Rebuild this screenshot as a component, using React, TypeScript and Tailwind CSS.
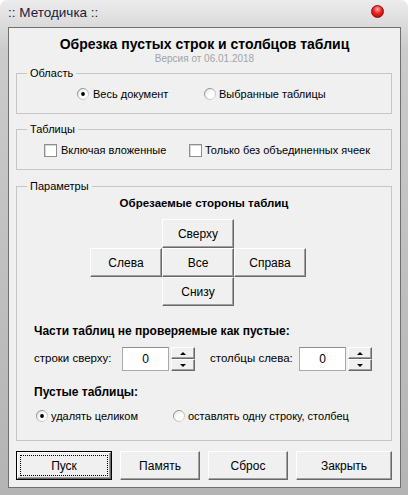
import React from "react";

const font = { fontFamily: '"Liberation Sans", Arial, sans-serif' };

function Radio({ checked }: { checked?: boolean }) {
  return (
    <svg viewBox="0 0 12 12" className="w-[12px] h-[12px] shrink-0">
      <defs>
        <linearGradient id="rg" x1="0" y1="0" x2="1" y2="1">
          <stop offset="0" stopColor="#7d7d7d" />
          <stop offset="1" stopColor="#e2e2e2" />
        </linearGradient>
        <linearGradient id="rf" x1="0" y1="0" x2="1" y2="1">
          <stop offset="0" stopColor="#dcdcdc" />
          <stop offset="0.5" stopColor="#ffffff" />
        </linearGradient>
      </defs>
      <circle cx="6" cy="6" r="5.5" fill="url(#rf)" stroke="url(#rg)" strokeWidth="1" />
      {checked && <circle cx="6" cy="6" r="1.9" fill="#000" />}
    </svg>
  );
}

function Checkbox() {
  return (
    <div className="w-[13px] h-[13px] shrink-0 border border-[#8f8f8f] bg-white shadow-[inset_1px_1px_0_#d8d8d8]" />
  );
}

function Btn({ children, className = "" }: { children: React.ReactNode; className?: string }) {
  return (
    <button className={`flex items-center justify-center bg-[#f0f0f0] border border-t-white border-l-white border-r-[#696969] border-b-[#696969] shadow-[inset_-1px_-1px_0_#a0a0a0] text-[12px] text-black ${className}`}>
      {children}
    </button>
  );
}

function Spin() {
  const half =
    "flex-1 flex items-center justify-center bg-[#f0f0f0] border border-t-white border-l-white border-r-[#696969] border-b-[#696969] shadow-[inset_-1px_-1px_0_#a0a0a0]";
  return (
    <div className="flex flex-col w-[24px] h-[24px] ml-[2px]">
      <div className={half}>
        <div className="w-0 h-0 border-l-[3px] border-r-[3px] border-b-[3px] border-l-transparent border-r-transparent border-b-black" />
      </div>
      <div className={half}>
        <div className="w-0 h-0 border-l-[3px] border-r-[3px] border-t-[3px] border-l-transparent border-r-transparent border-t-black" />
      </div>
    </div>
  );
}

function NumField() {
  return (
    <div className="w-[47px] h-[24px] border border-[#a9a9a9] border-t-[#8e8e8e] bg-white flex items-center justify-center text-[12px]">
      0
    </div>
  );
}

export default function App() {
  return (
    <div
      className="w-[408px] h-[495px] rounded-t-[7px] bg-gradient-to-b from-[#ececec] via-[#cbcbcb] via-10% to-[#b4b4b4] flex flex-col"
      style={font}
    >
      {/* Title bar */}
      <div className="h-[27px] flex items-center justify-between pl-[8px] pr-[24px]">
        <span className="text-[13.5px] text-[#1b1b3b]">:: Методичка ::</span>
        <div className="w-[13px] h-[13px] rounded-full border border-[#8c0a0a] bg-[radial-gradient(circle_at_50%_30%,#ffb4b4_0%,#f02a2a_40%,#b00000_100%)] -mt-[5px]" />
      </div>

      {/* Client area */}
      <div className="ml-[8px] w-[393px] h-[461px] border border-[#707070] bg-[#f0f0f0] text-black text-[11px]">
        <div className="mt-[8px] text-center font-bold text-[14px] leading-[16px]">
          Обрезка пустых строк и столбцов таблиц
        </div>
        <div className="text-center text-[10px] leading-[14px] text-[#a3a3a3]">Версия от 06.01.2018</div>

        <fieldset className="ml-[7px] w-[376px] border border-[#c6c6c6] p-0 m-0">
          <legend className="ml-[10px] px-[3px] leading-[14px]">Область</legend>
          <div className="flex items-center h-[16px] mt-[6px] mb-[11px]">
            <label className="ml-[60px] w-[127px] flex items-center gap-[4px]">
              <Radio checked />
              Весь документ
            </label>
            <label className="flex items-center gap-[3px]">
              <Radio />
              Выбранные таблицы
            </label>
          </div>
        </fieldset>

        <fieldset className="mt-[8px] ml-[7px] w-[376px] border border-[#c6c6c6] p-0">
          <legend className="ml-[10px] px-[3px] leading-[14px]">Таблицы</legend>
          <div className="flex items-center h-[16px] mt-[6px] mb-[11px]">
            <label className="ml-[27px] w-[145px] flex items-center gap-[4px]">
              <Checkbox />
              Включая вложенные
            </label>
            <label className="flex items-center gap-[3px]">
              <Checkbox />
              Только без объединенных ячеек
            </label>
          </div>
        </fieldset>

        <fieldset className="mt-[9px] ml-[7px] w-[376px] border border-[#c6c6c6] p-0">
          <legend className="ml-[10px] px-[3px] leading-[14px]">Параметры</legend>
          <div className="pt-[2px] pb-[16px]">
            <div className="text-center font-bold text-[11.5px] leading-[16px]">Обрезаемые стороны таблиц</div>
            <div className="mt-[8px] ml-[73px] w-[216px] grid grid-cols-[72px_72px_72px] grid-rows-[29px_29px_29px]">
              <Btn className="col-start-2 row-start-1">Сверху</Btn>
              <Btn className="col-start-1 row-start-2">Слева</Btn>
              <Btn className="col-start-2 row-start-2">Все</Btn>
              <Btn className="col-start-3 row-start-2">Справа</Btn>
              <Btn className="col-start-2 row-start-3">Снизу</Btn>
            </div>

            <div className="mt-[17px] pl-[17px] font-bold text-[12px] leading-[16px]">
              Части таблиц не проверяемые как пустые:
            </div>
            <div className="mt-[8px] pl-[17px] flex items-center h-[24px] text-[11.5px]">
              <span className="w-[88px]">строки сверху:</span>
              <NumField />
              <Spin />
              <span className="ml-[15px] w-[89px]">столбцы слева:</span>
              <NumField />
              <Spin />
            </div>

            <div className="mt-[13px] pl-[17px] font-bold text-[12px] leading-[16px]">Пустые таблицы:</div>
            <div className="mt-[8px] pl-[19px] flex items-center h-[16px]">
              <label className="w-[137px] flex items-center gap-[3px]">
                <Radio checked />
                удалять целиком
              </label>
              <label className="flex items-center gap-[3px]">
                <Radio />
                оставлять одну строку, столбец
              </label>
            </div>
          </div>
        </fieldset>

        <div className="mt-[10px] ml-[7px] flex gap-[8px]">
          <button className="w-[96px] h-[29px] border border-black p-0 bg-[#f0f0f0]">
            <div className="w-full h-full border border-t-white border-l-white border-r-[#696969] border-b-[#696969] shadow-[inset_-1px_-1px_0_#a0a0a0] p-[2px]">
              <div className="w-full h-full border border-dotted border-black flex items-center justify-center text-[12px]">
                Пуск
              </div>
            </div>
          </button>
          <Btn className="w-[80px] h-[29px]">Память</Btn>
          <Btn className="w-[80px] h-[29px]">Сброс</Btn>
          <Btn className="w-[96px] h-[29px]">Закрыть</Btn>
        </div>
      </div>
    </div>
  );
}
